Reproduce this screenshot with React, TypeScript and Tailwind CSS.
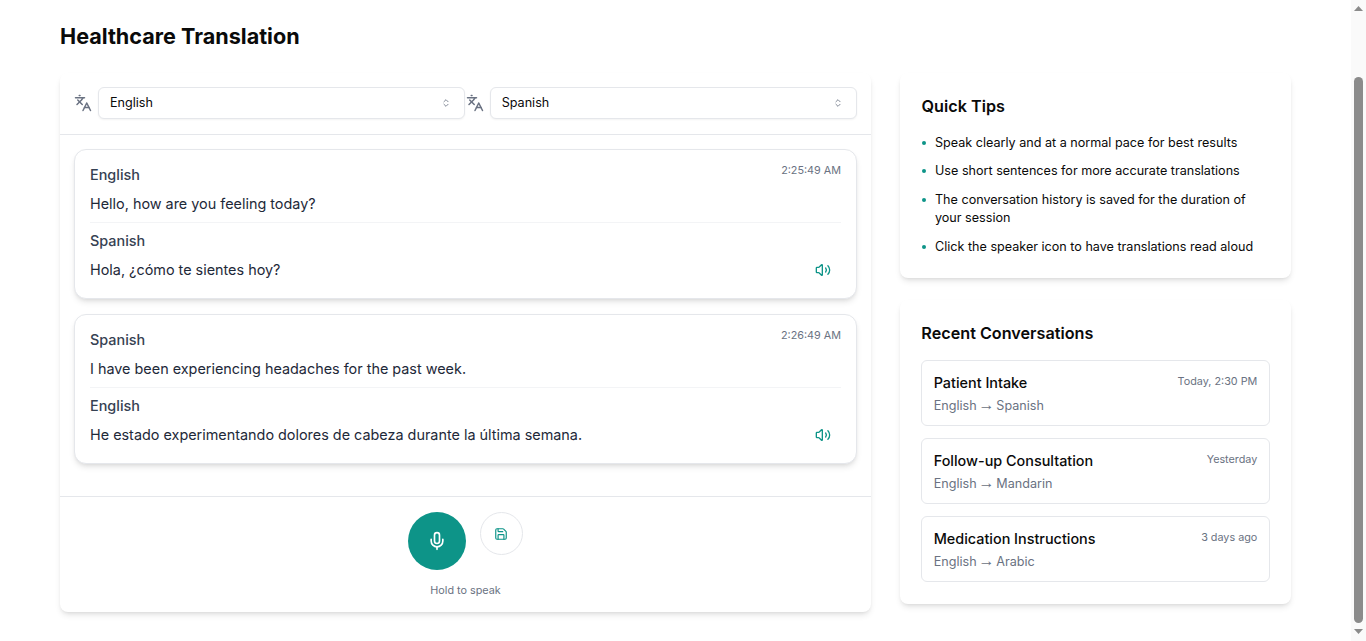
import React from "react";
import { Languages, ChevronsUpDown, Volume2, Mic, Save } from "lucide-react";

const messages = [
  {
    from: "English",
    to: "Spanish",
    time: "2:25:49 AM",
    original: "Hello, how are you feeling today?",
    translated: "Hola, ¿cómo te sientes hoy?",
  },
  {
    from: "Spanish",
    to: "English",
    time: "2:26:49 AM",
    original: "I have been experiencing headaches for the past week.",
    translated: "He estado experimentando dolores de cabeza durante la última semana.",
  },
];

const tips = [
  "Speak clearly and at a normal pace for best results",
  "Use short sentences for more accurate translations",
  "The conversation history is saved for the duration of your session",
  "Click the speaker icon to have translations read aloud",
];

const recent = [
  { title: "Patient Intake", when: "Today, 2:30 PM", from: "English", to: "Spanish" },
  { title: "Follow-up Consultation", when: "Yesterday", from: "English", to: "Mandarin" },
  { title: "Medication Instructions", when: "3 days ago", from: "English", to: "Arabic" },
];

function LangSelect({ value }: { value: string }) {
  return (
    <div className="flex flex-1 items-center gap-[6px] first:pr-[0.3px]">
      <Languages size={18} className="shrink-0 text-gray-500" />
      <div className="flex h-8 flex-1 items-center justify-between rounded-md border border-gray-200 bg-white px-[11px] text-[12.6px] text-[#0a0a0a] shadow-xs">
        <span>{value}</span>
        <ChevronsUpDown size={10} className="mr-[2px] text-gray-500" />
      </div>
    </div>
  );
}

function MessageCard({ m }: { m: (typeof messages)[number] }) {
  return (
    <div className="rounded-xl border border-gray-200 bg-white px-[15px] pt-[13px] pb-[17px] shadow-md">
      <div className="flex items-start justify-between">
        <div className="text-[14.4px] leading-[23px] font-medium text-gray-700">{m.from}</div>
        <div className="pt-px text-[10.8px] leading-[13px] text-gray-500">{m.time}</div>
      </div>
      <p className="mt-[6px] text-[14.4px] leading-[23px] text-gray-800">{m.original}</p>
      <div className="mt-[7px] border-t border-gray-100 pt-[6px]">
        <div className="text-[14.4px] leading-[23px] font-medium text-gray-700">{m.to}</div>
        <div className="mt-[6px] flex items-center justify-between">
          <p className="text-[14.4px] leading-[23px] text-gray-800">{m.translated}</p>
          <Volume2 size={16} className="mr-[10px] text-[#0d9488]" />
        </div>
      </div>
    </div>
  );
}

function FakeScrollbar() {
  return (
    <aside className="flex h-screen w-[15px] shrink-0 flex-col items-center bg-[#fafafa]">
      <svg width="9" height="5" viewBox="0 0 9 5" className="mt-[6px] shrink-0 fill-[#8b8b8b]">
        <polygon points="4.5,0 9,5 0,5" />
      </svg>
      <div className="mt-[66px] h-[546px] w-[9px] shrink-0 rounded-full bg-[#8b8b8b]" />
      <svg width="9" height="5" viewBox="0 0 9 5" className="mt-[6px] shrink-0 fill-[#8b8b8b]">
        <polygon points="0,0 9,0 4.5,5" />
      </svg>
    </aside>
  );
}

export default function App() {
  return (
    <div className="flex h-screen overflow-hidden bg-white font-['Inter',sans-serif]">
      <main className="min-w-0 flex-1 px-[60px]">
        <h1 className="pt-[20px] pb-[21px] text-[21.6px] leading-[32px] font-bold text-[#0a0a0a]">
          Healthcare Translation
        </h1>
        <div className="grid grid-cols-3 items-start gap-[29px]">
          <div className="col-span-2 rounded-lg bg-white shadow-md">
            <div className="flex h-[62px] items-start border-b border-gray-200 px-[14px] pt-[14px]">
              <LangSelect value="English" />
              <LangSelect value="Spanish" />
            </div>
            <div className="flex h-[362px] flex-col gap-[15px] border-b border-gray-200 px-[14px] pt-[14px]">
              {messages.map((m) => (
                <MessageCard key={m.time} m={m} />
              ))}
            </div>
            <div className="flex h-[115px] flex-col items-center pt-[15px]">
              <div className="flex items-start gap-[14.4px]">
                <div className="flex h-[57.6px] w-[57.6px] items-center justify-center rounded-full bg-[#0d9488] text-white">
                  <Mic size={20} />
                </div>
                <div className="flex h-[43.2px] w-[43.2px] items-center justify-center rounded-full border border-gray-200 bg-white text-[#0d9488]">
                  <Save size={14} />
                </div>
              </div>
              <div className="mt-[13.4px] text-[10.8px] leading-[16px] text-gray-500">Hold to speak</div>
            </div>
          </div>

          <div className="flex flex-col gap-[22px]">
            <div className="rounded-lg bg-white px-[21.6px] pt-[21px] pb-[22px] shadow-md">
              <h2 className="text-[16.2px] leading-[24px] font-semibold text-[#0a0a0a]">Quick Tips</h2>
              <ul className="mt-[15.8px] flex flex-col gap-[10.6px]">
                {tips.map((t) => (
                  <li key={t} className="flex text-[12.6px] leading-[18px] text-[#0a0a0a]">
                    <span className="mt-[7px] mr-[9.4px] h-[4px] w-[4px] shrink-0 rounded-full bg-[#0d9488]" />
                    <span>{t}</span>
                  </li>
                ))}
              </ul>
            </div>
            <div className="rounded-lg bg-white px-[21.3px] pt-[21px] pb-[22px] shadow-md">
              <h2 className="text-[16.2px] leading-[24px] font-semibold text-[#0a0a0a]">Recent Conversations</h2>
              <div className="mt-[15.4px] flex flex-col gap-[11.6px]">
                {recent.map((r) => (
                  <div key={r.title} className="h-[66.4px] rounded-md border border-gray-200 bg-white px-[11.4px] pt-[11px]">
                    <div className="flex items-start justify-between">
                      <div className="text-[14.4px] leading-[22px] font-medium text-[#0a0a0a]">{r.title}</div>
                      <div className="text-[10.8px] leading-[20px] text-gray-500">{r.when}</div>
                    </div>
                    <div className="mt-[2px] text-[12.6px] leading-[20px] text-gray-500">
                      {r.from}{" "}
                      <span className="mx-[-1.7px] font-['Liberation_Sans',sans-serif] text-[16px] leading-none">→</span>{" "}
                      {r.to}
                    </div>
                  </div>
                ))}
              </div>
            </div>
          </div>
        </div>
      </main>
      <FakeScrollbar />
    </div>
  );
}
